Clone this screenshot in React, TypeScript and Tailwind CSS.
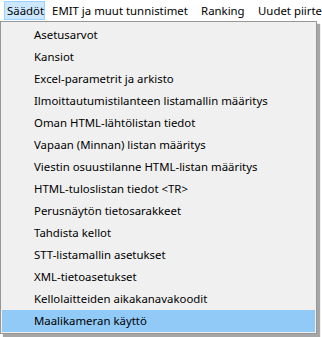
const items = [
  "Asetusarvot",
  "Kansiot",
  "Excel-parametrit ja arkisto",
  "Ilmoittautumistilanteen listamallin määritys",
  "Oman HTML-lähtölistan tiedot",
  "Vapaan (Minnan) listan määritys",
  "Viestin osuustilanne HTML-listan määritys",
  "HTML-tuloslistan tiedot <TR>",
  "Perusnäytön tietosarakkeet",
  "Tahdista kellot",
  "STT-listamallin asetukset",
  "XML-tietoasetukset",
  "Kellolaitteiden aikakanavakoodit",
  "Maalikameran käyttö",
];

export default function App() {
  return (
    <div className="relative w-[322px] h-[337px] overflow-hidden bg-white text-black text-[11.4px] font-['Noto_Sans',sans-serif]">
      {/* menu bar */}
      <div className="flex h-[21px] items-stretch pl-[4px] whitespace-nowrap">
        <div className="flex w-[45px] items-center mt-[1px] mb-[1px] border border-[#99d1ff] bg-[#cce8ff] pl-[2px]">
          Säädöt
        </div>
        <div className="flex w-[149px] items-center px-[7px]">EMIT ja muut tunnistimet</div>
        <div className="flex w-[57px] items-center px-[7px]">Ranking</div>
        <div className="flex items-center px-[7px]">Uudet piirteet</div>
      </div>

      {/* dropdown */}
      <div className="absolute left-0 top-[21px] w-[317px] border border-[#979797] bg-[#f0f0f0] pt-[2px] pb-[1px] px-[1px] shadow-[3px_3px_1px_rgba(0,0,0,0.35)]">
        {items.map((t, i) => (
          <div
            key={t}
            className={
              "flex h-[22px] items-center pl-[32px] pb-[1px] whitespace-nowrap " +
              (i === items.length - 1 ? "bg-[#91c9f7]" : "")
            }
          >
            {t}
          </div>
        ))}
      </div>
    </div>
  );
}
